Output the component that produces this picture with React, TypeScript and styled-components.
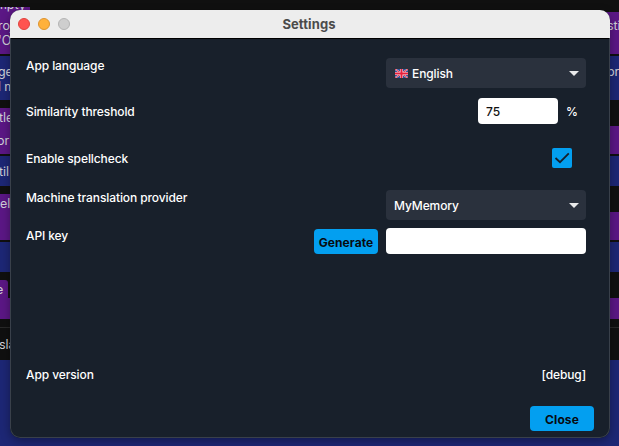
import React from "react";
import styled, { createGlobalStyle } from "styled-components";

const Global = createGlobalStyle`
  * { box-sizing: border-box; }
  html, body { margin: 0; background: #101010; overflow: hidden; }
  body, input, button { font: 500 12px/16px Inter, "Liberation Sans", sans-serif; letter-spacing: -0.1px; }
`;

const Stage = styled.div`
  position: relative;
  width: 619px;
  height: 446px;
  overflow: hidden;
  background: #101010;
`;

const Backdrop = styled.div`
  display: flex;
  flex-direction: column;
  height: 446px;
  padding-top: 7px;
  color: #d0d0d8;
  font-weight: 400;
  font-size: 12.5px;
  line-height: 15px;
`;

const Tab = styled.div<{ $w: number; $clipped?: boolean }>`
  flex: none;
  display: flex;
  align-items: ${(p) => (p.$clipped ? "flex-end" : "center")};
  width: ${(p) => p.$w}px;
  height: ${(p) => (p.$clipped ? 5 : 18)}px;
  overflow: ${(p) => (p.$clipped ? "hidden" : "visible")};
  white-space: nowrap;
  border-top-right-radius: ${(p) => (p.$clipped ? 0 : 3)}px;
  background: #5b1785;
`;

const Band = styled.div<{ $tone: "source" | "target"; $h: number; $gap?: number }>`
  flex: none;
  display: flex;
  justify-content: space-between;
  align-items: center;
  height: ${(p) => p.$h}px;
  margin-bottom: ${(p) => p.$gap ?? 0}px;
  background: ${(p) => (p.$tone === "source" ? "#5b1785" : "#1d2775")};
  white-space: pre-line;
`;

const TopAligned = styled(Band)`
  align-items: flex-start;
  padding-top: ${(p) => (p.$tone === "source" ? 6 : 8)}px;
`;

const Snippet = styled.span<{ $pull?: number }>`
  margin-left: ${(p) => -(p.$pull ?? 1)}px;
`;

const Tail = styled.div`
  width: 12px;
  white-space: nowrap;
`;

const Footer = styled.div`
  flex: none;
  height: 33px;
  padding-top: 9px;
  border-top: 1px solid #292929;
`;

const Dialog = styled.section`
  position: absolute;
  left: 10px;
  top: 10px;
  width: 600px;
  height: 428px;
  display: flex;
  flex-direction: column;
  overflow: hidden;
  border-radius: 10px;
  background: #18202b;
  color: #fff;
  box-shadow: 0 3px 10px rgba(0, 0, 0, 0.35);
  &::after {
    content: "";
    position: absolute;
    inset: 28px 0 0;
    border: solid #39404a;
    border-width: 0 1px 1px;
    border-radius: 0 0 10px 10px;
    pointer-events: none;
  }
`;

const TitleBar = styled.header`
  flex: none;
  display: grid;
  grid-template-columns: 80px 1fr 80px;
  align-items: center;
  height: 29px;
  padding-left: 8px;
  padding-right: 10px;
  border-bottom: 1px solid #000;
  background: #ededed;
`;

const Lights = styled.div`
  display: flex;
  gap: 8px;
`;

const Light = styled.span<{ $fill: string; $edge: string }>`
  width: 12px;
  height: 12px;
  border-radius: 50%;
  border: 1px solid ${(p) => p.$edge};
  background: ${(p) => p.$fill};
`;

const Title = styled.h1`
  margin: 0 0 1px;
  text-align: center;
  font-size: 13px;
  line-height: 16px;
  font-weight: 700;
  letter-spacing: 0.1px;
  color: #4b4b4b;
`;

const Form = styled.div`
  flex: none;
  display: grid;
  grid-template-rows: 46px 46px 47px 38px 40px;
  height: 308px;
  padding: 12px 24px 0 16px;
`;

const Row = styled.div<{ $shift?: number }>`
  display: flex;
  justify-content: space-between;
  align-items: flex-start;
  padding-top: ${(p) => p.$shift ?? 7}px;
`;

const Label = styled.span<{ $drop?: number }>`
  padding-top: ${(p) => p.$drop ?? 0}px;
  white-space: nowrap;
`;

const Controls = styled.div`
  display: flex;
  align-items: center;
  gap: 8px;
`;

const Select = styled.div`
  display: flex;
  align-items: center;
  width: 200px;
  height: 30px;
  padding: 0 7px 0 8px;
  border-radius: 4px;
  background: #2a313d;
  svg:last-child { margin-left: auto; }
`;

const Choice = styled.span`
  padding-top: 2px;
`;

const Field = styled.input<{ $w: number }>`
  width: ${(p) => p.$w}px;
  height: 26px;
  padding: 0 8px;
  border: 0;
  border-radius: 4px;
  background: #fff;
  color: #111;
  outline: none;
`;

const Percent = styled.span`
  width: 20px;
  padding-top: 2px;
`;

const Check = styled.span`
  display: grid;
  place-items: center;
  width: 20px;
  height: 20px;
  margin-right: 14px;
  border-radius: 2px;
  background: #039ff0;
`;

const Button = styled.button`
  width: 64px;
  height: 25px;
  padding: 3px 0 0;
  border: 0;
  border-radius: 4px;
  background: #039ff0;
  color: #080b10;
  font-weight: 700;
  letter-spacing: 0.1px;
`;

const Version = styled.div`
  flex: none;
  display: flex;
  justify-content: space-between;
  height: 49px;
  padding: 10px 24px 0 16px;
  margin-top: 10px;
`;

const Actions = styled.footer`
  display: flex;
  justify-content: flex-end;
  padding-right: 16px;
`;

const Caret = () => (
  <svg width="10" height="5" viewBox="0 0 10 5">
    <path d="M0 0H10L5 5Z" fill="#e9eaeb" />
  </svg>
);

const Flag = styled.svg`
  margin-right: 4px;
  margin-left: 1px;
`;

const UkFlag = () => (
  <Flag width="13" height="9" viewBox="0 0 13 9">
    <rect width="13" height="9" rx="1" fill="#33539a" />
    <path d="M0 0L13 9M13 0L0 9" stroke="#e6e0e8" strokeWidth="1.6" />
    <path d="M0 0L13 9M13 0L0 9" stroke="#e8203c" strokeWidth="0.9" />
    <path d="M6.5 0V9M0 4.5H13" stroke="#f4e9ee" strokeWidth="2.8" />
    <path d="M6.5 0V9M0 4.5H13" stroke="#e8203c" strokeWidth="1.9" />
  </Flag>
);

export default function App() {
  return (
    <>
      <Global />
      <Stage>
        <Backdrop>
          <Tab $w={30} $clipped><Snippet $pull={4}>mpty</Snippet></Tab>
          <TopAligned $tone="source" $h={42} $gap={2}>
            <Snippet $pull={2}>{"roj\n'O"}</Snippet>
            <Tail>sti</Tail>
          </TopAligned>
          <TopAligned $tone="target" $h={44} $gap={8}>
            <Snippet $pull={2}>{"get\nl m"}</Snippet>
            <Tail>pr</Tail>
          </TopAligned>
          <Tab $w={30}><Snippet>tle</Snippet></Tab>
          <Band $tone="source" $h={28} $gap={2}><Snippet $pull={3}>or</Snippet></Band>
          <Band $tone="target" $h={30} $gap={8}><Snippet>til</Snippet></Band>
          <Tab $w={30}><Snippet $pull={0}>el</Snippet></Tab>
          <Band $tone="source" $h={28} $gap={2} />
          <Band $tone="target" $h={30} $gap={8} />
          <Tab $w={8}><Snippet $pull={4}>e</Snippet></Tab>
          <Band $tone="source" $h={21} $gap={8} />
          <Footer><Snippet>sla</Snippet></Footer>
          <Band $tone="target" $h={86} />
        </Backdrop>
        <Dialog>
          <TitleBar>
            <Lights>
              <Light $fill="#ff5450" $edge="#e0443e" />
              <Light $fill="#ffb13c" $edge="#dd9430" />
              <Light $fill="#cecece" $edge="#b4b4b4" />
            </Lights>
            <Title>Settings</Title>
          </TitleBar>
          <Form>
            <Row>
              <Label>App language</Label>
              <Select><UkFlag /><Choice>English</Choice><Caret /></Select>
            </Row>
            <Row $shift={1}>
              <Label $drop={6}>Similarity threshold</Label>
              <Controls><Field $w={80} defaultValue="75" /><Percent>%</Percent></Controls>
            </Row>
            <Row $shift={5}>
              <Label $drop={3}>Enable spellcheck</Label>
              <Check>
                <svg width="20" height="20" viewBox="0 0 20 20">
                  <path d="M3.5 10L8 14.2L16.8 5.3" fill="none" stroke="#15202c" strokeWidth="1.8" />
                </svg>
              </Check>
            </Row>
            <Row $shift={0}>
              <Label>Machine translation provider</Label>
              <Select><Choice>MyMemory</Choice><Caret /></Select>
            </Row>
            <Row $shift={0}>
              <Label>API key</Label>
              <Controls><Button>Generate</Button><Field $w={200} /></Controls>
            </Row>
          </Form>
          <Version><span>App version</span><span>[debug]</span></Version>
          <Actions><Button>Close</Button></Actions>
        </Dialog>
      </Stage>
    </>
  );
}
